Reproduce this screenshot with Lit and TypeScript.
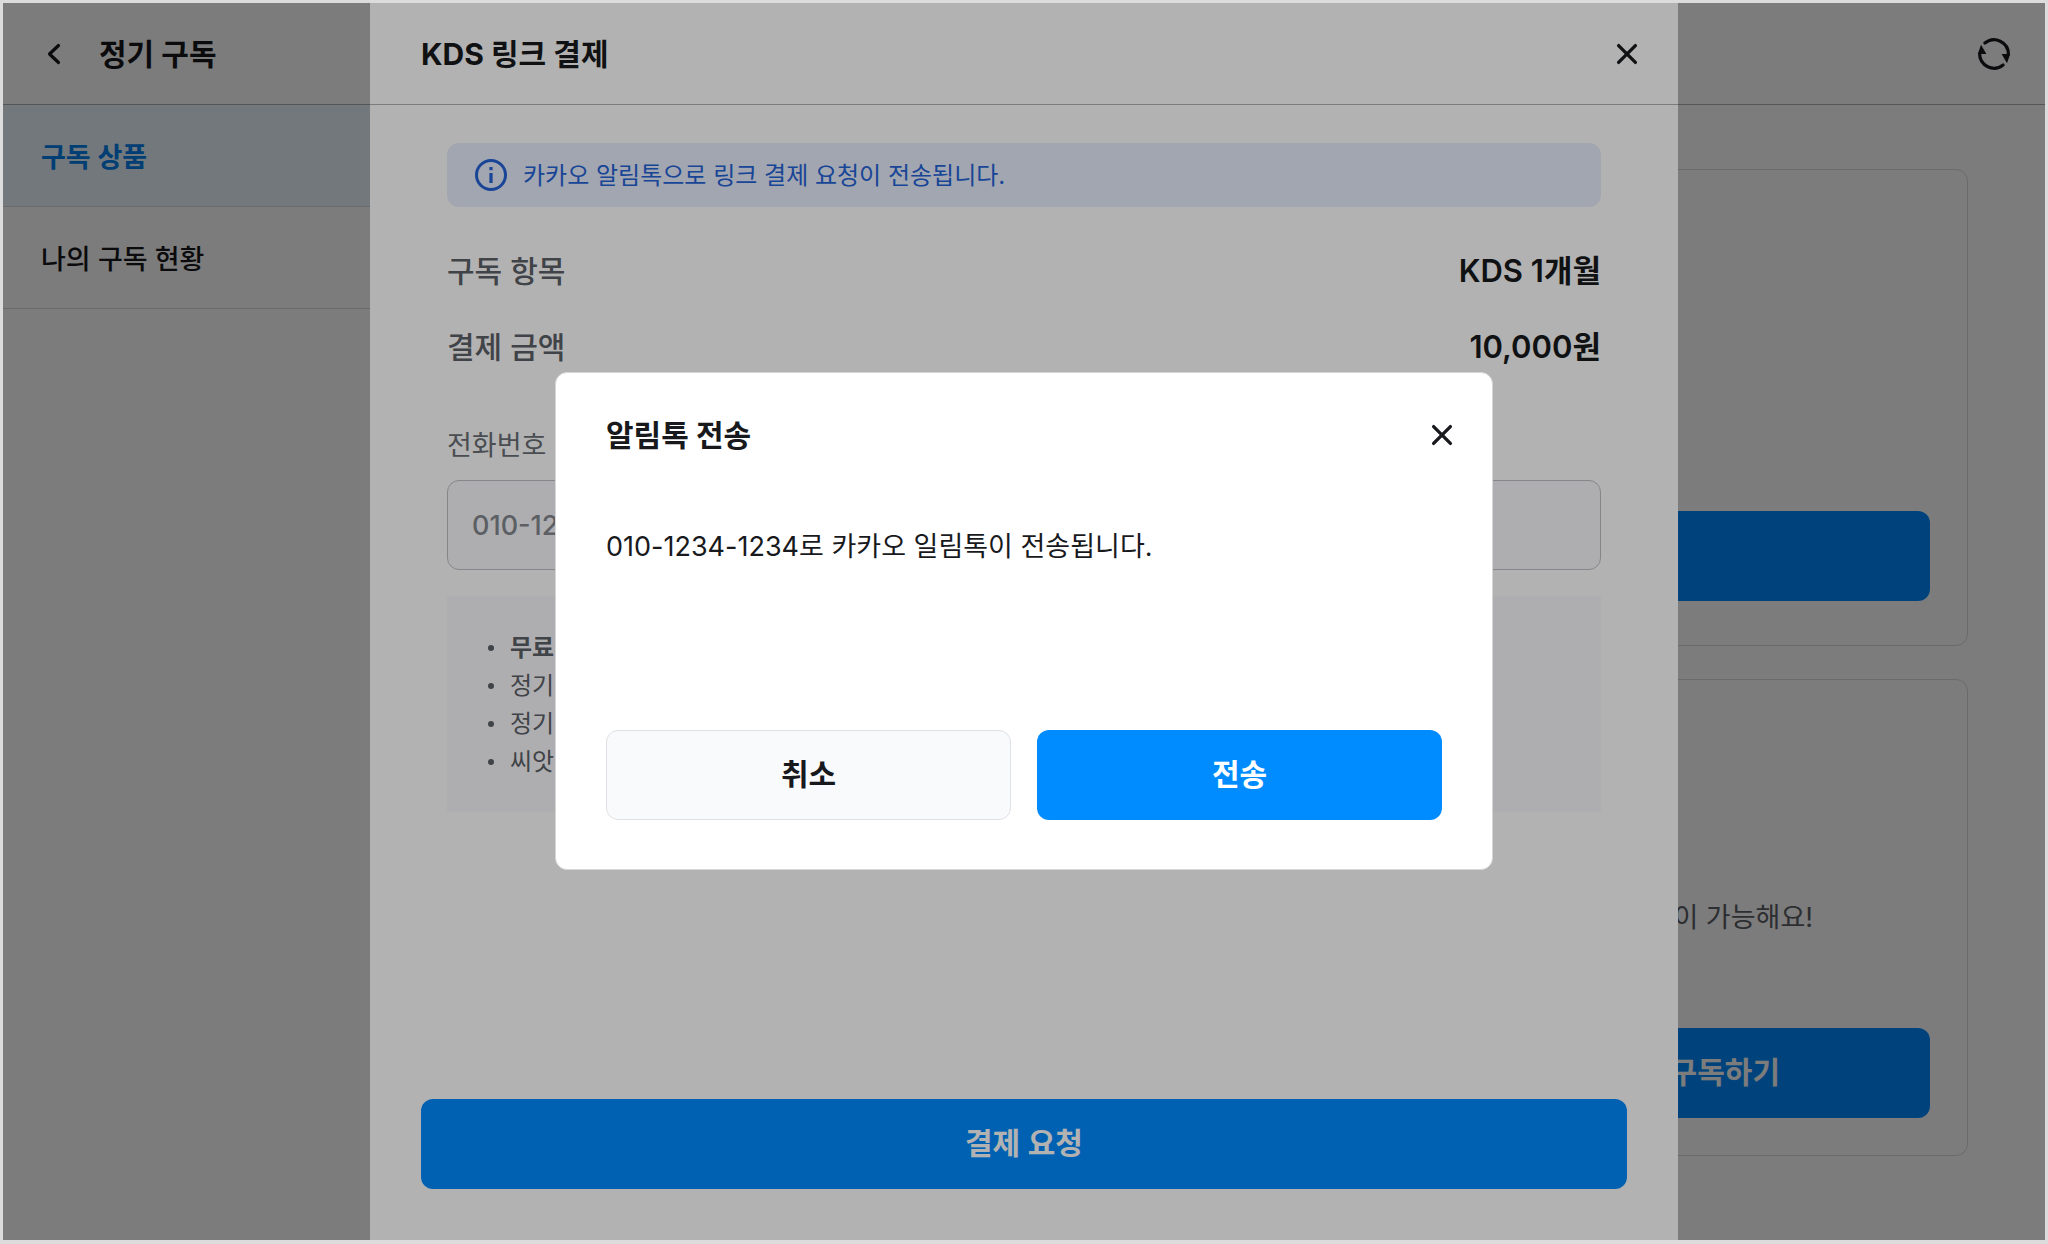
import { LitElement, html, css } from "lit";
import { customElement, property } from "lit/decorators.js";

const closeIcon = html`<svg class="icon" viewBox="0 0 32 32" aria-hidden="true">
  <path d="M7.6 7.6 24.4 24.4M24.4 7.6 7.6 24.4" fill="none" stroke="currentColor" stroke-width="3.3" stroke-linecap="round" />
</svg>`;

const backIcon = html`<svg class="icon" viewBox="0 0 32 32" aria-hidden="true">
  <path d="M20.5 7.5 11.5 16l9 8.5" fill="none" stroke="currentColor" stroke-width="3.2" stroke-linecap="round" stroke-linejoin="round" />
</svg>`;

const refreshIcon = html`<svg class="icon" viewBox="0 0 32 32" aria-hidden="true">
  <path d="M6.9 5.1A14.4 14.4 0 0 1 30.4 16.4M25.1 26.9A14.4 14.4 0 0 1 1.6 15.6"
    fill="none" stroke="currentColor" stroke-width="3.2" stroke-linecap="round" />
  <path d="M23.6 16h8.6l-3.2 9.2zM8.4 16H-.2L3 6.8z" fill="currentColor" />
</svg>`;

const infoIcon = html`<svg class="info-icon" viewBox="0 0 32 32" aria-hidden="true">
  <circle cx="16" cy="16" r="14.5" fill="none" stroke="currentColor" stroke-width="3" />
  <rect x="14.4" y="8" width="3.2" height="3.2" fill="currentColor" />
  <path d="M16 14v10" stroke="currentColor" stroke-width="3.2" />
</svg>`;

const base = css`
  :host {
    --blue: #008cff;
    --ink: #17191c;
    --line: #b2b2b2;
    --soft-line: #dadbde;
    font-family: Inter, "Noto Sans CJK KR", sans-serif;
    color: var(--ink);
    box-sizing: border-box;
  }
  *, *::before, *::after { box-sizing: border-box; }
  h1, h2, p, ul, dl, dd { margin: 0; padding: 0; }
  button, input { font: inherit; color: inherit; }
  .icon { display: block; width: 32px; height: 32px; overflow: visible; }
  .icon-button {
    display: flex; padding: 0; border: 0; background: none; cursor: pointer;
  }
  .bar {
    display: flex; align-items: center; height: 102px;
    border-bottom: 1px solid var(--line);
  }
  .title { font-size: 30px; line-height: 40px; font-weight: 700; }
  .primary, .secondary {
    height: 90px; padding: 0 0 2px; border: 0; border-radius: 12px; background: var(--blue); color: #fff;
    font-size: 30px; line-height: 40px; font-weight: 600; cursor: pointer;
  }
`;

@customElement("subscription-page")
export class SubscriptionPage extends LitElement {
  static styles = [base, css`
    :host { display: flex; flex-direction: column; height: 100%; background: #fff; }
    .bar { padding: 1px 35px 0; gap: 29px; }
    .bar .title { flex: 1; }
    .body { flex: 1; display: flex; min-height: 0; }
    .menu { width: 367px; }
    .menu a {
      display: flex; align-items: center; height: 102px; padding: 4px 38px 0;
      border-bottom: 1px solid var(--soft-line); color: inherit; text-decoration: none;
      font-size: 27px; line-height: 36px; font-weight: 500;
    }
    .menu .active { background: #ebf7ff; color: #0080f0; font-weight: 600; }
    .products {
      flex: 1; display: grid; grid-template-columns: 1fr 1fr; grid-auto-rows: 477px;
      gap: 33px; padding: 64px 77px;
    }
    .card {
      grid-column: 2; display: flex; flex-direction: column; justify-content: flex-end;
      padding: 37px; border: 1px solid var(--soft-line); border-radius: 12px;
    }
    .card.compact { padding-bottom: 44px; }
    .card p {
      margin-bottom: 92px; padding-right: 117px; text-align: right;
      font-size: 27px; line-height: 36px; color: #5c6066;
    }
    .card .primary { text-align: right; padding: 0 150px 2px; }
  `];

  render() {
    return html`
      <header class="bar">
        <button class="icon-button" aria-label="뒤로">${backIcon}</button>
        <h1 class="title">정기 구독</h1>
        <button class="icon-button" aria-label="새로고침">${refreshIcon}</button>
      </header>
      <div class="body">
        <nav class="menu">
          <a class="active" href="#products" aria-current="page">구독 상품</a>
          <a href="#mine">나의 구독 현황</a>
        </nav>
        <main class="products">
          <section class="card compact"><button class="primary" aria-label="구독"></button></section>
          <section class="card">
            <p>이 가능해요!</p>
            <button class="primary">구독하기</button>
          </section>
        </main>
      </div>
    `;
  }
}

@customElement("payment-sheet")
export class PaymentSheet extends LitElement {
  @property({ attribute: false }) rows = [
    { label: "구독 항목", value: "KDS 1개월" },
    { label: "결제 금액", value: "10,000원" },
  ];

  @property({ attribute: false }) notes = ["무료", "정기", "정기", "씨앗"];

  static styles = [base, css`
    :host { display: flex; flex-direction: column; background: #fff; }
    .bar { padding: 1px 35px 0 51px; justify-content: space-between; }
    .content { flex: 1; padding: 38px 77px; }
    .info {
      display: flex; align-items: center; gap: 16px; height: 64px; padding: 0 28px;
      border-radius: 12px; background: #e8eefc; color: #2563d8;
      font-size: 24px; line-height: 36px;
    }
    .info span { padding-top: 2px; }
    .info-icon { width: 32px; height: 32px; }
    .rows { display: flex; flex-direction: column; gap: 36px; margin-top: 44px; }
    .row { display: flex; justify-content: space-between; font-size: 30px; line-height: 40px; }
    .row dt { color: #5c6066; font-weight: 500; }
    .row dd { font-size: 31px; font-weight: 600; }
    .label {
      display: block; margin: 61px 0 16px;
      font-size: 27px; line-height: 36px; color: #6b6f75;
    }
    .field {
      display: block; width: 100%; height: 90px; padding: 0 24px;
      border: 1px solid #bfc1c6; border-radius: 12px; background: #f9fafc;
      font-size: 27px; line-height: 36px; font-weight: 500;
    }
    .field::placeholder { color: #84888e; opacity: 1; }
    .notes {
      margin-top: 26px; padding: 33px 64px 31px; background: #f9fafc; list-style: none;
      font-size: 24px; line-height: 38px; color: #5c6066;
    }
    .notes li { display: flex; align-items: center; }
    .notes li::before {
      content: ""; width: 6px; height: 6px; margin: 0 16px 0 -23px;
      border-radius: 50%; background: currentColor;
    }
    .notes li:first-child { font-weight: 600; }
    .foot { display: flex; padding: 0 51px 51px; }
    .foot .primary { flex: 1; }
  `];

  render() {
    return html`
      <header class="bar">
        <h2 class="title">KDS 링크 결제</h2>
        <button class="icon-button" aria-label="닫기">${closeIcon}</button>
      </header>
      <div class="content">
        <p class="info">${infoIcon}<span>카카오 알림톡으로 링크 결제 요청이 전송됩니다.</span></p>
        <dl class="rows">
          ${this.rows.map((r) => html`<div class="row"><dt>${r.label}</dt><dd>${r.value}</dd></div>`)}
        </dl>
        <label class="label" for="phone">전화번호</label>
        <input class="field" id="phone" type="tel" placeholder="010-1234-1234" />
        <ul class="notes">${this.notes.map((n) => html`<li>${n}</li>`)}</ul>
      </div>
      <footer class="foot"><button class="primary">결제 요청</button></footer>
    `;
  }
}

@customElement("confirm-dialog")
export class ConfirmDialog extends LitElement {
  static styles = [base, css`
    :host {
      display: flex; flex-direction: column; padding: 38px 50px 49px;
      border: 1px solid #d4d6d8; border-radius: 12px; background: #fff;
    }
    .head { display: flex; align-items: center; justify-content: space-between; height: 48px; }
    .head .icon-button { margin-right: -16px; }
    .message { margin: 70px 0 165px; font-size: 27px; line-height: 36px; }
    .actions { display: grid; grid-template-columns: 1fr 1fr; gap: 26px; }
    .secondary { background: #f9fafc; color: var(--ink); border: 1px solid #dfe1e4; }
  `];

  render() {
    return html`
      <header class="head">
        <h2 class="title">알림톡 전송</h2>
        <button class="icon-button" aria-label="닫기">${closeIcon}</button>
      </header>
      <p class="message">010-1234-1234로 카카오 일림톡이 전송됩니다.</p>
      <div class="actions">
        <button class="secondary">취소</button>
        <button class="primary">전송</button>
      </div>
    `;
  }
}

@customElement("app-root")
export class AppRoot extends LitElement {
  static styles = css`
    :host {
      display: block; box-sizing: border-box; height: 100vh; position: relative;
      border: 3px solid #dcdcdc; border-bottom-width: 4px; overflow: hidden;
    }
    .layer { position: absolute; inset: 0; display: flex; background: rgba(0, 0, 0, 0.3); }
    .layer.side { padding: 0 367px; }
    .layer.center { align-items: center; justify-content: center; padding-bottom: 2px; }
    payment-sheet { flex: 1; }
    confirm-dialog { width: 100%; max-width: 938px; }
  `;

  render() {
    return html`
      <subscription-page></subscription-page>
      <div class="layer side"><payment-sheet role="dialog" aria-label="KDS 링크 결제"></payment-sheet></div>
      <div class="layer center"><confirm-dialog role="dialog" aria-label="알림톡 전송"></confirm-dialog></div>
    `;
  }
}
